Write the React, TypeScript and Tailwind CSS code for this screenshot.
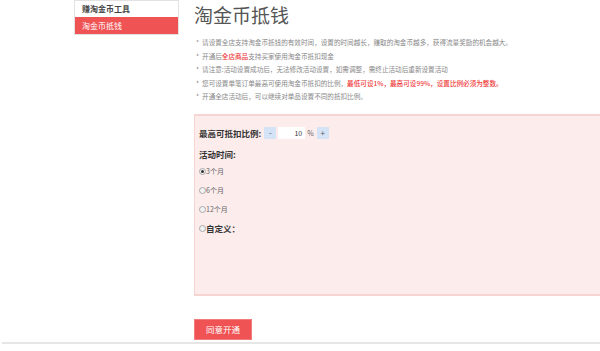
const cjk = "font-['Noto_Sans_CJK_SC','Noto_Sans',sans-serif]";

const notes: { text: string; red?: string; tail?: string }[] = [
  { text: "请设置全店支持淘金币抵钱的有效时间，设置的时间越长，赚取的淘金币越多，获得流量奖励的机会越大。" },
  { text: "开通后", red: "全店商品", tail: "支持买家使用淘金币抵扣现金" },
  { text: "请注意:活动设置成功后，无法修改活动设置，如需调整，需终止活动后重新设置活动" },
  { text: "您可设置单笔订单最高可使用淘金币抵扣的比例，", red: "最低可设1%，最高可设99%，设置比例必须为整数。" },
  { text: "开通全店活动后，可以继续对单品设置不同的抵扣比例。" },
];

const periods = [
  { label: "3个月", checked: true },
  { label: "6个月", checked: false },
  { label: "12个月", checked: false },
];

function Radio({ checked }: { checked?: boolean }) {
  return (
    <span className="flex h-[7px] w-[7px] items-center justify-center rounded-full border border-[#a9a9a9] bg-[#f2f2f2]">
      {checked && <span className="h-[3px] w-[3px] rounded-full bg-[#333]" />}
    </span>
  );
}

export default function App() {
  return (
    <div className={`flex h-[351px] w-[600px] flex-col overflow-hidden bg-white ${cjk}`}>
      <div className="flex flex-1">
        {/* sidebar */}
        <div className="ml-[74px] w-[105px]">
          <div className="border border-[#e2e2e2] bg-white">
            <div className="flex h-[16px] items-center pl-[7px] text-[8px] font-bold text-[#444]">赚淘金币工具</div>
            <div className="flex h-[17px] items-center bg-[#ef5354] pl-[7px] text-[8px] text-white">淘金币抵钱</div>
          </div>
        </div>

        {/* main */}
        <div className="ml-[15px] flex flex-1 flex-col">
          <h1 className="mt-[1px] text-[19px] leading-[28px] text-[#555]">淘金币抵钱</h1>

          <ul className="mt-[7px] pl-[2px] text-[6.6px] leading-[13.5px] text-[#888]">
            {notes.map((n, i) => (
              <li key={i} className="whitespace-nowrap">
                *&nbsp; {n.text}
                {n.red && <span className="font-medium text-[#ef3b3b]">{n.red}</span>}
                {n.tail}
              </li>
            ))}
          </ul>

          <div className="mt-[10px] h-[182px] border-y-2 border-l border-[#f6d4d2] bg-[#fcecec] pl-[4px] pt-[11px]">
            <div className="flex h-[13px] items-center text-[8.5px] font-bold text-[#333]">
              <span>最高可抵扣比例:</span>
              <span className="ml-[3px] flex h-[12px] w-[12px] items-center justify-center bg-[#d5e3f6] text-[8px] font-normal text-[#555]">-</span>
              <span className="ml-[2px] flex h-[12px] w-[27px] items-center justify-end bg-white pr-[3px] text-[7px] font-normal text-[#333]">10</span>
              <span className="ml-[2px] text-[7px] font-normal text-[#666]">%</span>
              <span className="ml-[3px] flex h-[12px] w-[12px] items-center justify-center bg-[#d5e3f6] text-[8px] font-normal text-[#555]">+</span>
            </div>
            <div className="mt-[8px] text-[8.5px] font-bold leading-[13px] text-[#333]">活动时间:</div>

            <div className="mt-[4px] flex flex-col gap-[6px]">
              {periods.map((p) => (
                <div key={p.label} className="flex h-[13px] items-center text-[7px] text-[#666]">
                  <Radio checked={p.checked} />
                  <span>{p.label}</span>
                </div>
              ))}
              <div className="flex h-[13px] items-center text-[8.5px] font-bold text-[#333]">
                <Radio />
                <span>自定义：</span>
              </div>
            </div>
          </div>

          <button className="mt-[23px] h-[21px] w-[58px] border border-[#f27c7c] bg-[#ef5354] text-[8.5px] text-white">
            同意开通
          </button>
        </div>
      </div>
      <div className="mb-[7px] ml-[2px] h-[2px] bg-[#e6e6e6]" />
    </div>
  );
}
